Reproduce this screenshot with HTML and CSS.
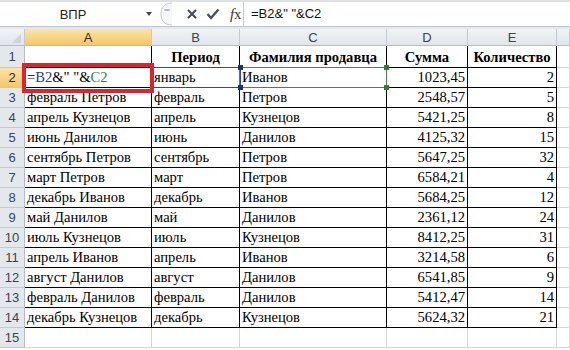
FILE: index.html
```html
<!DOCTYPE html>
<html lang="ru">
<head>
    <meta charset="UTF-8">
    <title>ВПР</title>
    <link rel="stylesheet" href="styles.css">
</head>
<body>
<div class="window">

    <div class="formula-bar">
        <div class="name-box">
            <span class="name">ВПР</span>
            <span class="dd"></span>
        </div>
        <div class="fx-tools">
            <svg class="grip" width="14" height="24" viewBox="0 0 14 24">
                <path d="M13 1 C5 1 2 6 2 12 C2 18 5 23 13 23" fill="#f6f7f9" stroke="#c3c9d1"/>
                <path d="M6 8 L10 8" stroke="#b5bcc6" stroke-width="2" stroke-linecap="round"/>
            </svg>
            <svg class="ico" width="12" height="12" viewBox="0 0 12 12">
                <path d="M2 2 L10 10 M10 2 L2 10" stroke="#4a4f57" stroke-width="2.2"/>
            </svg>
            <svg class="ico" width="14" height="12" viewBox="0 0 14 12">
                <path d="M1.5 6 L5 10 L12.5 1.5" fill="none" stroke="#4a4f57" stroke-width="2.4"/>
            </svg>
            <span class="fx"><i>f</i>x</span>
        </div>
        <div class="formula">=B2&amp;" "&amp;C2</div>
    </div>

    <div class="gap"></div>

    <div class="sheet">
        <div class="ch corner"><span class="tri"></span></div>
        <div class="ch sel">A</div>
        <div class="ch">B</div>
        <div class="ch">C</div>
        <div class="ch">D</div>
        <div class="ch">E</div>
        <div class="ch"></div>

        <div class="rh">1</div>
        <div class="c"></div>
        <div class="c hd">Период</div>
        <div class="c hd">Фамилия продавца</div>
        <div class="c hd">Сумма</div>
        <div class="c hd">Количество</div>
        <div class="e"></div>

        <div class="rh sel">2</div>
        <div class="c edit">=<span class="blue">B2</span>&amp;" "&amp;<span class="green">C2</span></div>
        <div class="c">январь</div>
        <div class="c">Иванов</div>
        <div class="c num">1023,45</div>
        <div class="c num">2</div>
        <div class="e"></div>

        <div class="rh">3</div><div class="c">февраль Петров</div><div class="c">февраль</div><div class="c">Петров</div><div class="c num">2548,57</div><div class="c num">5</div><div class="e"></div>
        <div class="rh">4</div><div class="c">апрель Кузнецов</div><div class="c">апрель</div><div class="c">Кузнецов</div><div class="c num">5421,25</div><div class="c num">8</div><div class="e"></div>
        <div class="rh">5</div><div class="c">июнь Данилов</div><div class="c">июнь</div><div class="c">Данилов</div><div class="c num">4125,32</div><div class="c num">15</div><div class="e"></div>
        <div class="rh">6</div><div class="c">сентябрь Петров</div><div class="c">сентябрь</div><div class="c">Петров</div><div class="c num">5647,25</div><div class="c num">32</div><div class="e"></div>
        <div class="rh">7</div><div class="c">март Петров</div><div class="c">март</div><div class="c">Петров</div><div class="c num">6584,21</div><div class="c num">4</div><div class="e"></div>
        <div class="rh">8</div><div class="c">декабрь Иванов</div><div class="c">декабрь</div><div class="c">Иванов</div><div class="c num">5684,25</div><div class="c num">12</div><div class="e"></div>
        <div class="rh">9</div><div class="c">май Данилов</div><div class="c">май</div><div class="c">Данилов</div><div class="c num">2361,12</div><div class="c num">24</div><div class="e"></div>
        <div class="rh">10</div><div class="c">июль Кузнецов</div><div class="c">июль</div><div class="c">Кузнецов</div><div class="c num">8412,25</div><div class="c num">31</div><div class="e"></div>
        <div class="rh">11</div><div class="c">апрель Иванов</div><div class="c">апрель</div><div class="c">Иванов</div><div class="c num">3214,58</div><div class="c num">6</div><div class="e"></div>
        <div class="rh">12</div><div class="c">август Данилов</div><div class="c">август</div><div class="c">Данилов</div><div class="c num">6541,85</div><div class="c num">9</div><div class="e"></div>
        <div class="rh">13</div><div class="c">февраль Данилов</div><div class="c">февраль</div><div class="c">Данилов</div><div class="c num">5412,47</div><div class="c num">14</div><div class="e"></div>
        <div class="rh">14</div><div class="c">декабрь Кузнецов</div><div class="c">декабрь</div><div class="c">Кузнецов</div><div class="c num">5624,32</div><div class="c num">21</div><div class="e"></div>

        <div class="rh">15</div><div class="e"></div><div class="e"></div><div class="e"></div><div class="e"></div><div class="e"></div><div class="e"></div>
    </div>

    <!-- highlight boxes drawn over the grid -->
    <div class="ref ref-green"><i class="k k1"></i><i class="k k2"></i></div>
    <div class="ref ref-blue"><i class="k k1"></i><i class="k k2"></i></div>
    <div class="mark"></div>
</div>
</body>
</html>
```

FILE: styles.css
```css
body {
    margin: 0;
    background: #fff;
    font-family: "Liberation Sans", Arial, sans-serif;
}

.window {
    position: relative;
    width: 570px;
    height: 350px;
    overflow: hidden;
}

/* formula bar */
.formula-bar {
    display: flex;
    height: 24px;
    border-top: 2px solid #dde1e6;
    border-bottom: 1px solid #bfc6cf;
}

.name-box {
    width: 157px;
    display: flex;
    align-items: center;
    font-size: 13px;
    color: #222;
}

.name-box .name {
    flex: 1;
    text-align: center;
}

.dd {
    width: 0;
    height: 0;
    margin-right: 5px;
    border-left: 3px solid transparent;
    border-right: 3px solid transparent;
    border-top: 4px solid #444;
}

.fx-tools {
    width: 86px;
    display: flex;
    align-items: center;
    border-right: 1px solid #c6ccd4;
}

.grip {
    margin-left: 2px;
    margin-right: 13px;
}

.ico {
    margin-right: 8px;
}

.fx {
    font-family: "Liberation Serif", serif;
    font-size: 14px;
    color: #333;
    margin-left: 2px;
}

.fx i {
    font-size: 15px;
}

.formula {
    flex: 1;
    padding-left: 7px;
    font-size: 13px;
    line-height: 24px;
    color: #111;
}

.gap {
    height: 2px;
    background: #e4e7eb;
}

/* grid */
.sheet {
    display: grid;
    grid-template-columns: 25px 127px 88px 147px 81px 89px 13px;
    grid-template-rows: 17px 22px repeat(14, 20px);
}

.sheet > div {
    box-sizing: border-box;
    overflow: hidden;
    white-space: nowrap;
}

.ch {
    display: flex;
    align-items: center;
    justify-content: center;
    font-size: 13px;
    color: #3b4452;
    background: linear-gradient(#f1f3f5, #e1e5ea);
    border-right: 1px solid #c3c9d1;
    border-bottom: 1px solid #b5bcc6;
}

.corner {
    position: relative;
}

.tri {
    position: absolute;
    right: 3px;
    bottom: 2px;
    width: 0;
    height: 0;
    border-left: 9px solid transparent;
    border-bottom: 9px solid #cfd4da;
}

.rh {
    display: flex;
    align-items: center;
    justify-content: center;
    font-size: 13px;
    color: #3b4452;
    background: #e4e8ed;
    border-right: 1px solid #b5bcc6;
    border-bottom: 1px solid #c3c9d1;
}

.sel {
    background: linear-gradient(#fbe3a9, #f4c767);
    color: #2b2b2b;
}

.c,
.e {
    display: flex;
    align-items: flex-end;
    padding: 0 2px 1px;
    font-family: "Liberation Serif", "Times New Roman", serif;
    font-size: 14.6px;
    line-height: 17px;
    color: #000;
}

.c {
    border-right: 1px solid #000;
    border-bottom: 1px solid #000;
}

.e {
    border-right: 1px solid #d4d6d9;
    border-bottom: 1px solid #d4d6d9;
}

.hd {
    font-weight: bold;
    justify-content: center;
}

.num {
    justify-content: flex-end;
}

.edit .blue {
    color: #1c3aa0;
}

.edit .green {
    color: #2f8a35;
}

/* reference highlight boxes and the red annotation */
.ref {
    position: absolute;
    box-sizing: border-box;
    top: 67px;
    height: 21px;
}

.ref-blue {
    left: 151px;
    width: 90px;
    border: 1px solid #2c48a8;
}

.ref-green {
    left: 239px;
    width: 148px;
    border: 1px solid #3d8c3d;
}

.k {
    position: absolute;
    right: -3px;
    width: 5px;
    height: 5px;
}

.k1 { top: -3px; }
.k2 { bottom: -3px; }

.ref-blue .k { background: #1e2f86; }
.ref-green .k { background: #2e7d32; }

.mark {
    position: absolute;
    box-sizing: border-box;
    left: 22px;
    top: 63px;
    width: 132px;
    height: 30px;
    border: 4px solid #dc2330;
}
```
